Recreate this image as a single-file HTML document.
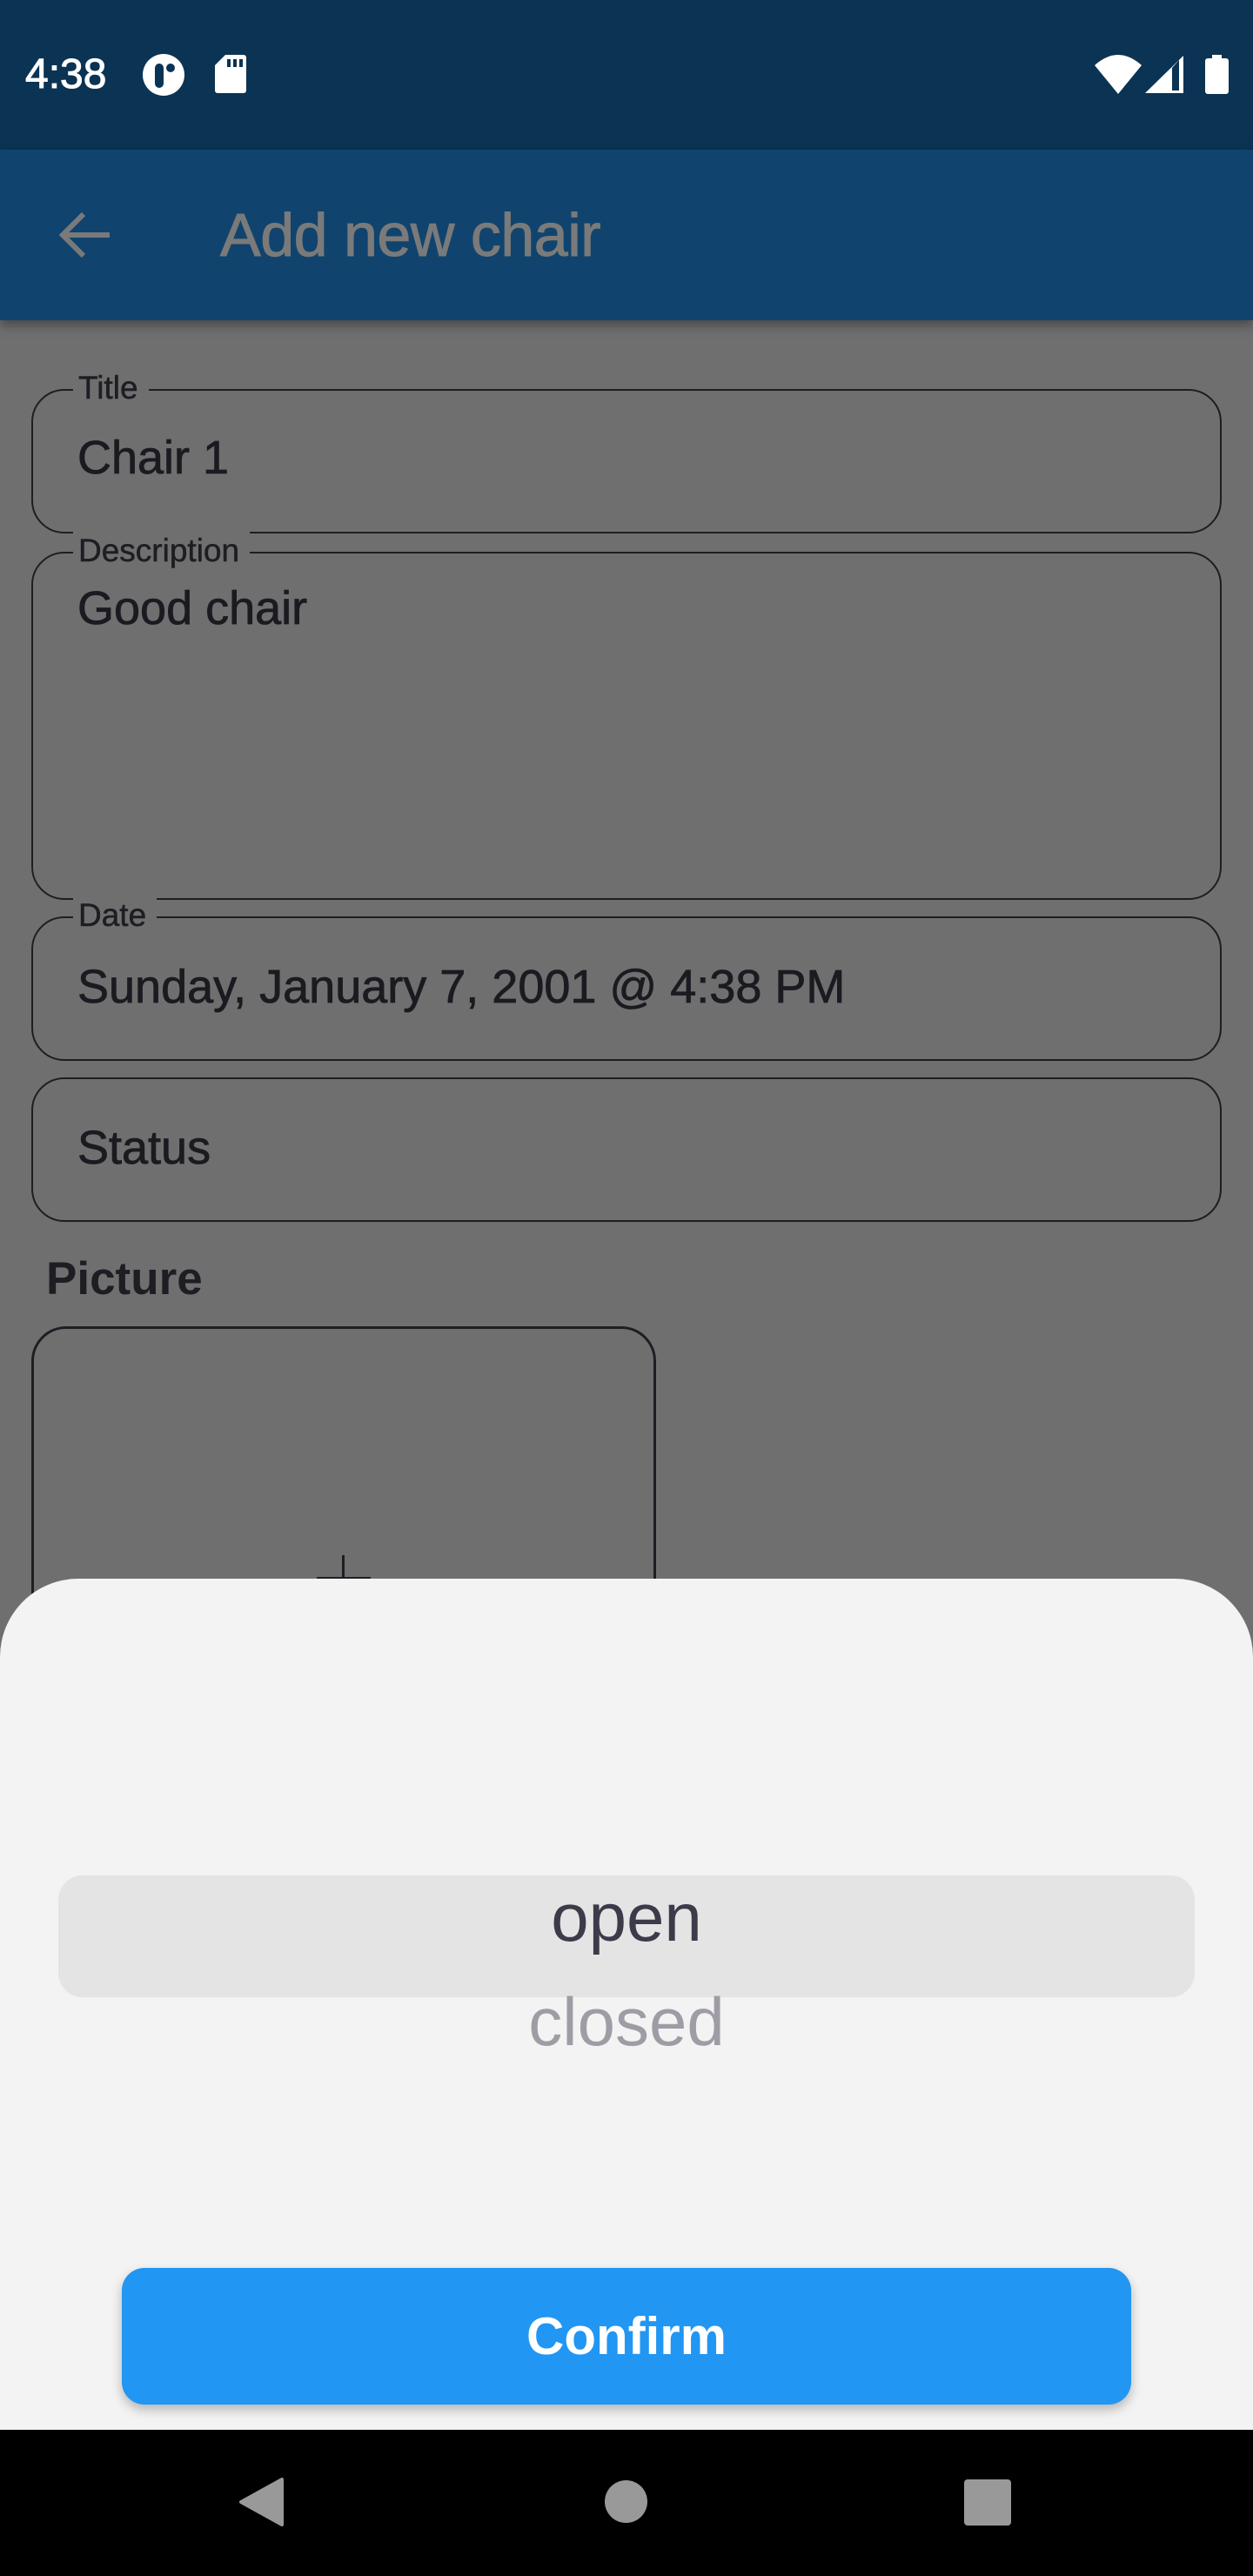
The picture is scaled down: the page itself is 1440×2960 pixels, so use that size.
<!DOCTYPE html>
<html><head><meta charset="utf-8">
<style>
*{margin:0;padding:0;box-sizing:border-box}
body{width:1440px;height:2960px;position:relative;overflow:hidden;background:#6f6f6f;font-family:"Liberation Sans",sans-serif}
.a{position:absolute}
.field{position:absolute;left:36px;width:1368px;border:2px solid #1f1d24;border-radius:38px}
.lbl{position:absolute;left:46px;top:-26px;font-size:37px;color:#1f1d24;background:#6f6f6f;padding:0 12px 0 6px;line-height:46px;-webkit-text-stroke:0.5px #1f1d24}
.val{position:absolute;left:51px;font-size:54px;color:#1c1a21;white-space:nowrap;-webkit-text-stroke:0.8px #1c1a21}
</style></head><body>
<div class="a" style="left:0;top:0;width:1440px;height:172px;background:#0b3353"></div>
<div class="a" style="left:29px;top:61px;font-size:48px;color:#fff;line-height:50px;-webkit-text-stroke:1px #fff">4:38</div>
<svg class="a" style="left:160px;top:58px" width="56" height="56" viewBox="0 0 56 56"><circle cx="28" cy="28" r="24" fill="#fff"/><rect x="18" y="15" width="10" height="28" rx="5" fill="#0b3353"/><circle cx="36" cy="20" r="5" fill="#0b3353"/></svg>
<svg class="a" style="left:247px;top:63px" width="36" height="44" viewBox="0 0 36 44"><path d="M12 0H33a3 3 0 0 1 3 3V41a3 3 0 0 1-3 3H3a3 3 0 0 1-3-3V12Z" fill="#fff"/><rect x="14" y="5" width="4" height="9" fill="#0b3353"/><rect x="21" y="5" width="4" height="9" fill="#0b3353"/><rect x="28" y="5" width="4" height="9" fill="#0b3353"/></svg>
<svg class="a" style="left:1258px;top:63px" width="54" height="45" viewBox="0 0 54 45"><path d="M0 12Q27-12 54 12L27 45Z" fill="#fff"/></svg>
<svg class="a" style="left:1316px;top:64px" width="44" height="43" viewBox="0 0 44 43"><path d="M44 0V43H0Z" fill="#fff"/><path d="M31 14V40H39V5Z" fill="#0b3353"/></svg>
<svg class="a" style="left:1385px;top:63px" width="27" height="45" viewBox="0 0 27 45"><rect x="8" y="0" width="11" height="5" fill="#fff"/><rect x="0" y="4" width="27" height="41" rx="3" fill="#fff"/></svg>
<div class="a" style="left:0;top:172px;width:1440px;height:196px;background:#10446e;box-shadow:0 6px 12px rgba(0,0,0,.35)"></div>
<svg class="a" style="left:66px;top:240px" width="64" height="60" viewBox="0 0 64 60"><path d="M60 30H8M30 6L6 30L30 54" stroke="#7a7a7a" stroke-width="6" fill="none"/></svg>
<div class="a" style="left:253px;top:230px;font-size:70px;color:#7a7a7a;line-height:80px;letter-spacing:-0.5px;-webkit-text-stroke:1px #7a7a7a">Add new chair</div>

<div class="field" style="top:447px;height:166px"><div class="lbl">Title</div><div class="val" style="top:46px">Chair 1</div></div>
<div class="field" style="top:634px;height:400px"><div class="lbl">Description</div><div class="val" style="top:32px">Good chair</div></div>
<div class="field" style="top:1053px;height:166px"><div class="lbl">Date</div><div class="val" style="top:48px">Sunday, January 7, 2001 @ 4:38 PM</div></div>
<div class="field" style="top:1238px;height:166px"><div class="val" style="top:48px">Status</div></div>
<div class="a" style="left:53px;top:1440px;font-size:53px;font-weight:bold;color:#1f1d24;line-height:60px">Picture</div>
<div class="a" style="left:36px;top:1524px;width:718px;height:500px;border:3px solid #1f1d24;border-radius:40px"></div>
<div class="a" style="left:393px;top:1787px;width:3px;height:60px;background:#1f1d24"></div>
<div class="a" style="left:364px;top:1812px;width:62px;height:3px;background:#1f1d24"></div>

<div class="a" style="left:0;top:1814px;width:1440px;height:978px;background:#f3f3f3;border-radius:90px 90px 0 0"></div>
<div class="a" style="left:67px;top:2155px;width:1306px;height:140px;background:#e4e4e4;border-radius:28px"></div>
<div class="a" style="left:0;top:2158px;width:1440px;text-align:center;font-size:78px;color:#3f3a4a;line-height:90px">open</div>
<div class="a" style="left:0;top:2278px;width:1440px;text-align:center;font-size:78px;color:#a09ca6;line-height:90px">closed</div>
<div class="a" style="left:140px;top:2606px;width:1160px;height:157px;background:#2196f3;border-radius:26px;box-shadow:0 6px 12px rgba(0,0,0,.25);color:#fff;font-weight:bold;font-size:60px;text-align:center;line-height:157px">Confirm</div>

<div class="a" style="left:0;top:2792px;width:1440px;height:168px;background:#000"></div>
<svg class="a" style="left:274px;top:2846px" width="54" height="58" viewBox="0 0 54 58"><path d="M50 3V55L3 29Z" fill="#999" stroke="#999" stroke-width="4" stroke-linejoin="round"/></svg>
<div class="a" style="left:695px;top:2850px;width:49px;height:49px;border-radius:50%;background:#999"></div>
<div class="a" style="left:1108px;top:2849px;width:54px;height:53px;border-radius:4px;background:#999"></div>
</body></html>
